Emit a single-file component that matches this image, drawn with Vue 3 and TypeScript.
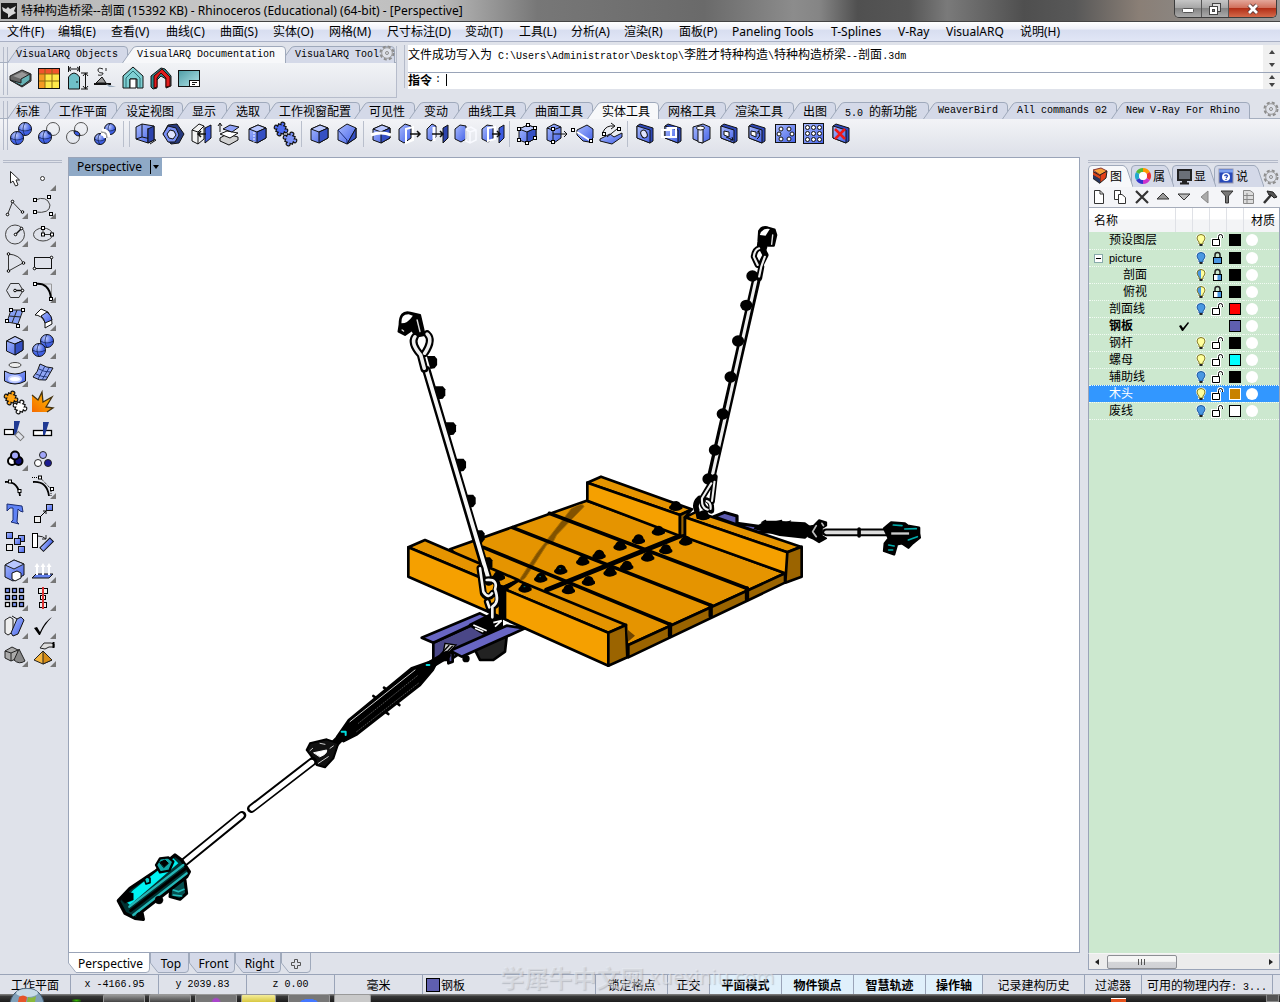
<script setup lang="ts">
import { ref } from 'vue'

interface Tab { label: string; x: number; latin?: boolean }
interface DrawnTab extends Tab { width: number; pad: number }
interface Layer {
  name: string; depth: number; bulb?: 'on' | 'off' | 'half'; lock?: 'open' | 'shut' | 'half'
  color: string; current?: boolean; selected?: boolean; parent?: boolean
}

const menus: [string, number][] = [
  ['文件(F)', 51], ['编辑(E)', 53], ['查看(V)', 55], ['曲线(C)', 54], ['曲面(S)', 53], ['实体(O)', 56],
  ['网格(M)', 58], ['尺寸标注(D)', 78], ['变动(T)', 54], ['工具(L)', 52], ['分析(A)', 53], ['渲染(R)', 55],
  ['面板(P)', 53], ['Paneling Tools', 99], ['T-Splines', 67], ['V-Ray', 48], ['VisualARQ', 74], ['说明(H)', 60],
]

/* Tabs are given by where their label starts; each one leans over its left neighbour. */
function layTabs(list: Tab[], end: number): DrawnTab[] {
  return list.map((t, i) => {
    const start = i ? t.x - 15 : 7
    const stop = i + 1 < list.length ? list[i + 1].x - 9 : end
    return { ...t, width: stop - start, pad: t.x - start }
  })
}
const arqTabs = layTabs([
  { label: 'VisualARQ Objects', x: 16, latin: true },
  { label: 'VisualARQ Documentation', x: 137, latin: true },
  { label: 'VisualARQ Tool', x: 295, latin: true },
], 395)
const toolTabs = layTabs([
  { label: '标准', x: 16 }, { label: '工作平面', x: 59 }, { label: '设定视图', x: 126 }, { label: '显示', x: 192 },
  { label: '选取', x: 236 }, { label: '工作视窗配置', x: 279 }, { label: '可见性', x: 369 }, { label: '变动', x: 424 },
  { label: '曲线工具', x: 468 }, { label: '曲面工具', x: 535 }, { label: '实体工具', x: 602 }, { label: '网格工具', x: 668 },
  { label: '渲染工具', x: 735 }, { label: '出图', x: 803 }, { label: '5.0 的新功能', x: 845 },
  { label: 'WeaverBird', x: 938, latin: true }, { label: 'All commands 02', x: 1017, latin: true },
  { label: 'New V-Ray For Rhino', x: 1126, latin: true },
], 1250)
const arqActive = ref(1)
const toolActive = ref(10)

function leanLeft(w: number): string {
  return `M.5 17L11 2Q12.500 .5 15 .5H${w - 4}Q${w - 0.5} .5 ${w - 0.5} 4V17`
}
function leanRight(w: number): string {
  return `M.5 22V4Q.5 .5 4 .5H${w - 10}Q${w - 8} .5 ${w - 6} 4L${w} 22`
}
function hangDown(w: number): string {
  return `M.5 0V10L8 19.500H${w - 4}Q${w - 0.5} 19.500 ${w - 0.5} 16V0`
}

const B = 'fill="url(#blu)" stroke="#111"'
const sq = (x: number, y: number) => `<rect x="${x - 1.5}" y="${y - 1.5}" width="3" height="3" fill="#fff" stroke="#000"/>`
const dot = (x: number, y: number) => `<circle cx="${x}" cy="${y}" r="1.300" fill="#fff" stroke="#000"/>`
const sphere = (x: number, y: number, r = 6.5) =>
  `<circle cx="${x}" cy="${y}" r="${r}" fill="url(#ball)" stroke="#111"/><path d="M${x - r} ${y}Q${x} ${y + 4} ${x + r} ${y}M${x} ${y - r}Q${x - 4} ${y} ${x} ${y + r}" fill="none" stroke="#13245c" stroke-width=".8"/>`
const ghost = (x: number, y: number) => `<circle cx="${x}" cy="${y}" r="6.500" fill="none" stroke="#555"/>`
const cube = `<path d="M6 9L15 5L23 8V18L14 23L6 20Z" ${B}/><path d="M6 9L14 12L23 8L15 5Z" fill="#b9c7ff" stroke="#111"/><path d="M14 12L23 8V18L14 23Z" fill="#3550c4" stroke="#111"/>`
const slab = `<path d="M6 6L9 4L22 8V21L19 23L6 18Z" fill="#2e48b8" stroke="#111"/><path d="M6 6L19 10V23L6 18Z" ${B}/>`
const puzzle = (x: number, y: number, f: string) =>
  `<path transform="translate(${x} ${y}) rotate(20)" d="M-4 -4H-1.500Q-3 -7 0 -7Q3 -7 1.500 -4H4V-1.500Q7 -3 7 0Q7 3 4 1.500V4H1.500Q3 7 0 7Q-3 7 -1.500 4H-4V1.500Q-7 3 -7 0Q-7 -3 -4 -1.500Z" fill="${f}" stroke="#111" stroke-width="1.200"/>`
const gear = `<circle cx="14" cy="14" r="6.500" fill="none" stroke="#8d8d8d" stroke-width="2" stroke-dasharray="3 2.105"/><circle cx="14" cy="14" r="5.300" fill="#dfe2ea" stroke="#999"/><circle cx="14" cy="14" r="1.500" fill="none" stroke="#8d8d8d"/>`

const icons: Record<string, string> = {
  gear,
  slabArq: `<path d="M3 12L15 6L24 10V17L15 23L3 16Z" fill="#666" stroke="#222"/><path d="M6 12L15 8L21 11L14 15Z" fill="#999"/><path d="M14 15L23 10V16L15 22L3 16L14 19Z" fill="#66b2b5" stroke="#222"/>`,
  table: `<rect x="3.500" y="4.500" width="21" height="20" fill="#ffe94a" stroke="#111"/><path d="M4 5H24V10H4Z" fill="#f2542d"/><path d="M4 10H10V24H4Z" fill="#f59a23"/><path d="M10 5V24M17 5V24M4 10H24M4 17H24" stroke="#8a6a10"/>`,
  dims: `<path d="M5.500 25V13Q11 5 16.500 13V25Z" fill="#6fc0c8" stroke="#111"/><circle cx="14" cy="18" r=".8"/><path d="M5.500 2V8M16.500 2V8M5 5H17M18 9H25M18 25H25M22.500 9V25" stroke="#111" fill="none"/><path d="M8 3L5 5L8 7M14 3L17 5L14 7M20 12L22.500 9L25 12M20 22L22.500 25L25 22" fill="none" stroke="#111"/>`,
  level: `<path d="M3 20H20" stroke="#111" stroke-width="2"/><path d="M5 19L11 13L15 19Z" fill="#999" stroke="#111"/><path d="M15 20L25 23H18Z" fill="#9ab"/><path d="M12 5Q7 3 7 6T12 9Q12 12 7 11M15 4V7" fill="none" stroke="#222"/>`,
  houseOpen: `<path d="M4 24V12L14 3L24 12V24H18V15H11V24Z" fill="#7fd0d3" stroke="#111"/><path d="M7 24V14L14 7L21 14V24" fill="none" stroke="#2a6f74"/><path d="M11 24V15H17V24Z" fill="#fff" stroke="#111"/>`,
  houseRed: `<path d="M4 23V12L14 4L18 5L24 12V22L19 24V15L14 12L10 16V24L6 25Z" fill="#2b8d91" stroke="#111"/><path d="M7 24V12L15 5L23 13V22L19 23V14L14 9L10 14V23Z" fill="#e21d1d" stroke="#400"/>`,
  sheet: `<rect x="3.500" y="6.500" width="21" height="16" fill="url(#teal)" stroke="#111"/><rect x="14.500" y="16.500" width="10" height="6" fill="#fff" stroke="#111"/><path d="M17 18.500H22M17 20.500H20" stroke="#111"/>`,
  union: sphere(18, 9) + sphere(10, 18),
  diff: ghost(18, 9) + sphere(10, 17) + `<path d="M12 11Q17 12 16.500 15Q12 15 12 11Z" fill="#13245c"/>`,
  inter: ghost(18, 9) + ghost(10, 17) + `<path d="M11 11Q17 11 17 16Q11 16 11 11Z" fill="#3b5ae0" stroke="#111"/>`,
  split: sphere(19, 9, 5.5) + sphere(9, 19, 5.5) + `<path d="M11 10Q18 10 18 17M10 14Q14 14 14 18" fill="none" stroke="#fff" stroke-width="3"/><path d="M10 12Q16 12 16 18" fill="none" stroke="#777"/>`,
  extrude: `<path d="M5 7L11 4L23 6V20L17 23L5 19Z" ${B}/><path d="M11 4V17L5 19M11 17L25 20L19 24M17 8V23" fill="none" stroke="#111"/><path d="M17 9L23 6V20L17 23Z" fill="#2c43ad" stroke="#111"/>`,
  pipe: `<path d="M4 14L9 5L18 4L25 14L20 23L12 24Z" fill="#26397f" stroke="#111"/><path d="M4 14L9 6L17 8L20 15L16 22L9 22Z" fill="#7990f4" stroke="#111"/><path d="M8 14L11 10L15 11L17 15L14 19L10 18Z" fill="#dfe3ff" stroke="#111"/>`,
  pull: `<path d="M5 10L12 4L17 6V19L11 24L5 21Z" fill="#f3f3f3" stroke="#111"/><path d="M5 10L11 12V24M11 12L17 6" fill="none" stroke="#111"/><path d="M18 8L24 5V18L18 23Z" fill="#3b5ae0" stroke="#111"/><path d="M19 14H11M14 11L11 14L14 17" fill="none" stroke="#111" stroke-width="1.500"/>`,
  stack: `<path d="M5 18L12 14L23 17V20L14 25L5 21Z" fill="#d2d2d2" stroke="#111"/><path d="M5 14L12 11L23 13L15 18Z" fill="#fff" stroke="#111"/><path d="M8 9L15 5L24 7L17 12Z" fill="#8ea1f8" stroke="#111"/><path d="M5 12V4M3 6L5 3L7 6" fill="none" stroke="#111"/>`,
  cubeDash: cube + `<path d="M11 12V22" stroke="#fff" stroke-dasharray="2 1"/>`,
  puzzles: puzzle(10, 9, '#4e6cf0') + puzzle(19, 19, '#7b92f7'),
  cube,
  cubeCut: `<path d="M5 10L14 4L23 8V18L14 24L5 20Z" ${B}/><path d="M23 8L14 24V20L5 10" fill="none" stroke="#1b2c7a"/><path d="M23 8V18L14 24Z" fill="#3550c4" stroke="#111"/>`,
  slice: cube + `<path d="M4 15Q14 11 24 15" fill="none" stroke="#fff" stroke-width="3"/>`,
  moveFace: `<path d="M4 9L10 4L16 6V18L9 23L4 20Z" ${B}/><path d="M11 9L18 7V20L11 23Z" fill="none" stroke="#fff" stroke-width="2"/><path d="M15 14H25M22 11L25 14L22 17" fill="none" stroke="#111" stroke-width="1.500"/>`,
  moveTo: `<path d="M4 9L9 4L13 6V17L8 21L4 19Z" ${B}/><path d="M20 8L25 5V18L20 23Z" fill="#2c43ad" stroke="#111"/><path d="M11 7V21" stroke="#fff" stroke-width="3"/><path d="M9 14H20M17 11L20 14L17 17" fill="none" stroke="#111" stroke-width="1.500"/>`,
  copyHole: `<path d="M4 9L9 5L15 6V19L10 22L4 19Z" ${B}/><path d="M15 9L20 7L25 10V20L19 23L15 21ZM15 9L19 12L25 10M19 12V23" fill="none" stroke="#f9faff" stroke-width="1.500"/>`,
  offsetFace: `<path d="M3 9L8 5L14 6V19L9 22L3 19Z" ${B}/><path d="M9 8L16 7V19L9 21Z" fill="none" stroke="#fff" stroke-width="2"/><path d="M20 8L25 5V18L20 23Z" fill="#3b5ae0" stroke="#111"/><path d="M13 14H21M18 11L21 14L18 17" fill="none" stroke="#111" stroke-width="1.500"/>`,
  cubePts: cube + sq(6, 9) + sq(15, 5) + sq(22, 8) + sq(22, 18) + sq(14, 23) + sq(6, 20),
  edgeMove: `<path d="M6 8L13 4L20 7V18L13 23L6 20Z" ${B}/><path d="M6 8L12 10L20 7M12 10V23M12 14H26M23 11L26 14L23 17" fill="none" stroke="#111"/>` + sq(12, 9) + sq(12, 22),
  faceSlide: `<path d="M8 10L18 5L24 9V18L20 22L14 21L8 15Z" ${B}/><path d="M8 12L22 21" stroke="#fff" stroke-width="2"/>` + sq(4, 10) + sq(22, 21),
  fold: `<path d="M3 19L13 14L17 17L25 13L25 17L15 24L3 21Z" ${B}/><path d="M6 12Q9 5 17 6M14 3L18 6L14 9" fill="none" stroke="#111"/><path d="M10 17L20 9" stroke="#111"/>` + sq(22, 9) + sq(7, 14),
  hole: slab + `<ellipse cx="13" cy="14" rx="3" ry="4" fill="#dfe3ff" stroke="#111" transform="rotate(-25 13 14)"/>`,
  holeRect: slab + `<path d="M3 10H12V17H3ZM8 8H17V17H8" fill="none" stroke="#fff" stroke-width="2"/>`,
  holeRound: `<path d="M6 7L16 4L23 7V19L15 23L6 19Z" ${B}/><path d="M11 8V22L16 23V9" fill="#e1e6ff" stroke="#111"/><ellipse cx="13.500" cy="8" rx="4" ry="2" fill="#fff" stroke="#111"/>`,
  holeMove: slab + `<path d="M9 11L14 12V17L9 15Z" fill="#fff" stroke="#111"/><path d="M11 17L18 20M15 20L18 20L17 17" fill="none" stroke="#111"/>`,
  holeTurn: slab + `<path d="M8 11L13 12V17L8 15Z" fill="#fff" stroke="#111"/><path d="M15 11Q19 15 14 19M17 11L15 11L15 14" fill="none" stroke="#111"/>`,
  holeRing: `<rect x="4.500" y="4.500" width="20" height="18" ${B}/>` + [[10, 9], [18, 9], [8, 14], [21, 14], [10, 19], [18, 19]].map(p => `<circle cx="${p[0]}" cy="${p[1]}" r="2" fill="#fff" stroke="#111"/>`).join(''),
  holeGrid: `<rect x="4.500" y="3.500" width="20" height="20" ${B}/>` + [8, 14, 20].map(y => [8.5, 14.5, 20.5].map(x => `<circle cx="${x}" cy="${y - 0.5}" r="2" fill="#fff" stroke="#111"/>`).join('')).join(''),
  holeDelete: slab + `<path d="M8 9L18 19M18 9L8 19" stroke="#f01818" stroke-width="2.500"/>`,

  arrow: `<path d="M9.500 7.500V19L12 17L14.500 22L17 21L15 16H18.500Z" fill="#fff" stroke="#222"/>`,
  point: `<circle cx="13.500" cy="14.500" r="2" fill="#fff" stroke="#333"/>`,
  polyline: `<path d="M6.500 22.500L11.500 10L21 20" fill="none" stroke="#333"/>` + dot(6.5, 22.5) + dot(11.5, 9.5) + dot(21.5, 20),
  curve: `<path d="M6 8Q18 3 21 13Q21 22 6 20" fill="none" stroke="#444"/>` + sq(6, 8) + sq(20, 5) + sq(6, 20) + sq(22, 22),
  circle: `<circle cx="14" cy="14.500" r="9.500" fill="none" stroke="#444"/><path d="M14.500 14.500L20.500 8.500" stroke="#111" stroke-width="1.500"/>` + dot(14.5, 14.5) + dot(20.5, 8.5),
  ellipse: `<ellipse cx="14" cy="14.500" rx="9.500" ry="6.500" fill="none" stroke="#444"/><path d="M14 8V14.500H23" fill="none" stroke="#333"/>` + sq(14, 8) + sq(14, 14.5) + sq(23, 14.5),
  arc: `<path d="M7.500 23V6Q19 7 22 15L7.500 23" fill="none" stroke="#333"/>` + dot(7.5, 6) + dot(22.5, 15) + dot(7.5, 23),
  rect: `<rect x="5.500" y="9.500" width="17" height="11" fill="none" stroke="#111"/>` + dot(22.5, 9.5) + dot(5.5, 20.5),
  polygon: `<path d="M5.500 14.500L9.500 7.500H18L22 14.500L18 21.500H9.500Z" fill="none" stroke="#333"/><path d="M14 14.500H21" stroke="#111" stroke-width="1.500"/>` + dot(14, 14.5) + dot(21.5, 14.5),
  fillet: `<path d="M6 8H22.500V23" fill="none" stroke="#999"/><path d="M6 8Q20 6 22 22" fill="none" stroke="#000" stroke-width="2"/>` + sq(6, 8) + sq(22, 23),
  surface: `<path d="M10 6H22L17 20L6 18Z" fill="#86a0f4" stroke="#222"/><path d="M8 12L20 13M16 6L11 19" stroke="#222"/>` + sq(10, 6) + sq(22, 6) + sq(6, 17) + sq(17, 22),
  sweep: `<path d="M6 11L12 5L19 8Q24 14 23 20L16 24L16 18Q12 11 6 11Z" fill="#fff" stroke="#111"/><path d="M12 12L18 8Q23 12 23 16L16 19Q15 14 12 12Z" fill="url(#blu)" stroke="#111"/>`,
  box: `<path d="M5.500 9L14 4.500L22 8.500V18L14 23L5.500 19Z" ${B}/><path d="M5.500 9L14 12L22 8.500L14 4.500Z" fill="#b9c7ff" stroke="#111"/><path d="M14 12L22 8.500V18L14 23Z" fill="#3550c4" stroke="#111"/>`,
  balls: sphere(18, 9) + sphere(10, 18),
  ring: `<ellipse cx="14" cy="5" rx="6" ry="2.500" fill="#eee" stroke="#444"/><path d="M3.500 11Q14 17 24.500 11V21Q14 27 3.500 21Z" ${B}/><ellipse cx="14" cy="19" rx="6" ry="3" fill="#fff" stroke="#c8d2ff" stroke-width="2"/>`,
  wave: `<path d="M11 4Q18 8 24 8L17 20Q10 21 4 17Q9 12 11 4Z" fill="#90a6f5" stroke="#111"/><path d="M10 9Q15 12 21 12M7 14Q13 17 18 17M16 6L9 19M20 8L13 20" fill="none" stroke="#22377a"/>`,
  puzzleOrange: puzzle(10, 10, '#ffa313') + puzzle(19, 19, '#fff'),
  explode: `<path d="M3 7L9 12L13 4L14 14L23 9L17 19L24 20L18 24H3Z" fill="url(#fire)"/><path d="M3 7L9 12L13 4L14 14L23 9L17 19L24 20L18 24" fill="none" stroke="#431" stroke-width="1.300"/>`,
  trim: `<rect x="3.500" y="13.500" width="9" height="5" fill="#fff" stroke="#000" stroke-width="1.200"/><path d="M13 5H19L15 19H13Z" fill="#1f3a93"/><rect x="15" y="17" width="8" height="5" fill="none" stroke="#777" transform="rotate(45 18 19)"/>`,
  splitCurve: `<rect x="4.500" y="14.500" width="18" height="5" fill="#fff" stroke="#000" stroke-width="1.300"/><path d="M14 6H20L16 19H14Z" fill="#1f3a93"/>`,
  group: `<g stroke="#000" stroke-width="2"><circle cx="11" cy="17" r="4" fill="#fff"/><circle cx="17.500" cy="17" r="4" fill="#12127a"/><circle cx="14" cy="11.500" r="4" fill="#a2a7fa"/></g>`,
  ungroup: `<g stroke="#222"><circle cx="9" cy="19" r="3.500" fill="#fff"/><circle cx="19" cy="19" r="3.500" fill="#1b1b92"/><circle cx="14" cy="11" r="3.500" fill="#a2a7fa"/></g>`,
  editPts: `<path d="M4 10Q17 9 19 24" fill="none" stroke="#000" stroke-width="1.800"/>` + sq(9, 9.5) + sq(18.5, 19),
  ctrlPts: `<path d="M4 10Q18 9 20 24" fill="none" stroke="#000" stroke-width="1.800"/><path d="M3 5.500H11L22 17V24" fill="none" stroke="#000" stroke-dasharray="1 1"/>` + sq(11, 5.5) + sq(23, 17),
  text: `<path d="M6 4L21 6L22 12L19 11L17 9L16 22L18 24L10 22L12 20V8L9 8L6 11Z" fill="#5f82f5" stroke="#1a2c70"/>`,
  move: `<rect x="5.500" y="16.500" width="6" height="6" fill="#eee" stroke="#000"/><rect x="17.500" y="4.500" width="6" height="6" ${B}/><path d="M12 16L17 11M14 11H17V14" fill="none" stroke="#000"/>`,
  copy: [[5, 5], [17, 8], [13, 11], [17, 19]].map(p => `<rect x="${p[0] + 0.5}" y="${p[1] - 0.5}" width="6" height="6" ${B}/>`).join('') + `<rect x="5.500" y="16.500" width="6" height="6" fill="#eee" stroke="#000"/>`,
  rotate: `<rect x="3.500" y="5.500" width="5" height="14" fill="#fff" stroke="#000"/><rect x="11" y="14" width="14" height="5" ${B} transform="rotate(-45 18 17)"/><path d="M9 8Q14 8 17 11M17 7V11H13" fill="none" stroke="#222"/>`,
  solid: `<path d="M4 9L13 4L23 8V19L12 25L4 21Z" ${B}/><path d="M4 9L13 13L23 8L13 4Z" fill="#b9c7ff" stroke="#222"/><path d="M11 17L16 15L20 17V22L14 25L11 23Z" fill="#fff" stroke="#111"/>`,
  up: `<path d="M3 22L7 18H24L20 22Z" fill="#6785f2" stroke="#111"/><path d="M8 19V10M14 19V10M20 19V10" stroke="#fff" stroke-width="2"/><path d="M5.500 11L8 7L10.500 11ZM11.500 11L14 7L16.500 11ZM17.500 11L20 7L22.500 11Z" fill="#fff"/>`,
  array: [0, 1, 2].map(r => [0, 1, 2].map(c => `<rect x="${4.5 + c * 7}" y="${4.5 + r * 7}" width="4" height="4" fill="${r === 2 && c === 0 ? '#fff' : '#7d97f8'}" stroke="#000" stroke-width="1.300"/>`).join('')).join(''),
  align: `<rect x="9.500" y="4.500" width="9" height="5" fill="#eee" stroke="#000"/><rect x="11.500" y="11.500" width="5" height="4" fill="#eee" stroke="#000"/><rect x="10.500" y="18.500" width="7" height="5" fill="#eee" stroke="#000"/><path d="M14 3V25" stroke="#d33" stroke-width="2"/>`,
  bend: `<path d="M4 8L9 5L12 7V20L7 23L4 21Z" fill="#eee" stroke="#222"/><path d="M16 7L20 5L23 8L17 22L12 24L10 21Z" ${B}/><path d="M11 4L16 7" stroke="#111"/>`,
  check: `<path d="M5 16L8 15L11 20Q16 9 23 5Q15 13 11 23H10Z" fill="#000"/>`,
  solids: `<path d="M4 11L11 7L17 10V18L10 21L4 18Z" fill="#aaa" stroke="#222"/><path d="M4 11L10 13L17 10M10 13V21" fill="none" stroke="#222"/><path d="M18 9L24 21Q18 25 13 20Z" fill="#888" stroke="#222"/>`,
  pyramid: `<path d="M14 11L23 20L14 24L5 20Z" fill="#f5b53f" stroke="#222"/><path d="M14 11V24L23 20Z" fill="#d58d18" stroke="#222"/><path d="M11 8L15 3H22L25 4V7L20 7L16 9Z" fill="#ddd" stroke="#222"/><path d="M24.500 2V8" stroke="#000" stroke-width="2"/>`,
}

const arqIcons = ['slabArq', 'table', 'dims', 'level', 'houseOpen', 'houseRed', 'sheet']
const toolGroups = [
  ['union', 'diff', 'inter', 'split'],
  ['extrude', 'pipe', 'pull', 'stack', 'cubeDash', 'puzzles'],
  ['cube', 'cubeCut'],
  ['slice', 'moveFace', 'moveTo', 'copyHole', 'offsetFace'],
  ['cubePts', 'edgeMove', 'faceSlide', 'fold'],
  ['hole', 'holeRect', 'holeRound', 'holeMove', 'holeTurn', 'holeRing', 'holeGrid', 'holeDelete'],
]
const sideIcons = [
  'arrow', 'point', 'polyline', 'curve', 'circle', 'ellipse', 'arc', 'rect', 'polygon', 'fillet', 'surface', 'sweep',
  'box', 'balls', 'ring', 'wave', 'puzzleOrange', 'explode', 'trim', 'splitCurve', 'group', 'ungroup', 'editPts', 'ctrlPts',
  'text', 'move', 'copy', 'rotate', 'solid', 'up', 'array', 'align', 'bend', 'check', 'solids', 'pyramid',
]
const noFlyout = new Set(['arrow', 'puzzleOrange', 'explode', 'trim', 'splitCurve', 'ungroup', 'editPts', 'text', 'copy', 'rotate'])

const panelTabs = [
  { label: '图', width: 45, icon: '<path d="M2 4L9 7V17L2 12Z" fill="#222"/><path d="M2 3L10 1L16 4L9 8Z" fill="#f7a23b" stroke="#833"/><path d="M9 8L16 4L15 11L9 16Z" fill="#e5421b" stroke="#222"/><path d="M2 5L9 9V12L2 8Z" fill="#d8451e"/><path d="M2 8L9 12V16L2 11Z" fill="#27365f"/>' },
  { label: '属', width: 43, icon: '<g fill="none" stroke-width="4"><path d="M9 3A6 6 0 0 1 14.200 6" stroke="#f90"/><path d="M14.200 6A6 6 0 0 1 14.200 12" stroke="#e33"/><path d="M14.200 12A6 6 0 0 1 9 15" stroke="#c3c"/><path d="M9 15A6 6 0 0 1 3.800 12" stroke="#33c"/><path d="M3.800 12A6 6 0 0 1 3.800 6" stroke="#2ac"/><path d="M3.800 6A6 6 0 0 1 9 3" stroke="#5b3"/></g><circle cx="9" cy="9" r="4" fill="#fff"/>' },
  { label: '显', width: 44, icon: '<rect x="3" y="3" width="13" height="10" fill="#6b7078" stroke="#222" stroke-width="2"/><path d="M7 15H12M5 16.500H14" stroke="#222" stroke-width="2"/>' },
  { label: '说', width: 50, icon: '<rect x="2" y="2" width="14" height="14" fill="#2749b8" stroke="#99a"/><path d="M2 4H16" stroke="#7ca0ee" stroke-width="3"/><circle cx="9" cy="10" r="4" fill="#fff"/><path d="M7.500 9Q9 7 10.500 9Q10 10 9 11M9 12V13" fill="none" stroke="#2749b8" stroke-width="1.300"/>' },
]
const panelTools = [
  '<path d="M5.500 3.500H11L14.500 7V16.500H5.500Z" fill="#fff" stroke="#333"/><path d="M11 3.500V7H14.500" fill="none" stroke="#333"/>',
  '<path d="M4.500 3.500H10.500V12.500H4.500Z" fill="#fff" stroke="#333"/><path d="M8.500 7.500H12L15.500 10.500V16.500H8.500Z" fill="#fff" stroke="#333"/>',
  '<path d="M4 4L16 16M16 4L4 16" stroke="#333" stroke-width="2.200"/>',
  '<path d="M4 12L10 6L16 12Z" fill="#999" stroke="#333"/>',
  '<path d="M4 7L10 13L16 7Z" fill="#bbb" stroke="#333"/>',
  '<path d="M13 4V16L6 10Z" fill="#aaa" stroke="#888"/>',
  '<path d="M4 4H16L11.500 9V16H8.500V9Z" fill="#777" stroke="#333"/>',
  '<path d="M5.500 3.500H12L15.500 6V16.500H5.500ZM5.500 8.500H15.500M5.500 12.500H15.500M9 6V16" fill="#ddd" stroke="#888"/>',
  '<path d="M5 16L12 8" stroke="#333" stroke-width="2.500"/><path d="M8 4L14 5L18 10L15 11L12 8L10 8Z" fill="#555" stroke="#222"/>',
]
const layers: Layer[] = [
  { name: '预设图层', depth: 0, bulb: 'on', lock: 'open', color: '#000' },
  { name: 'picture', depth: 0, bulb: 'off', lock: 'shut', color: '#000', parent: true },
  { name: '剖面', depth: 1, bulb: 'half', lock: 'half', color: '#000' },
  { name: '俯视', depth: 1, bulb: 'half', lock: 'half', color: '#000' },
  { name: '剖面线', depth: 0, bulb: 'off', lock: 'open', color: '#f00' },
  { name: '钢板', depth: 0, color: '#5f5fb0', current: true },
  { name: '钢杆', depth: 0, bulb: 'on', lock: 'open', color: '#000' },
  { name: '螺母', depth: 0, bulb: 'on', lock: 'open', color: '#0ff' },
  { name: '辅助线', depth: 0, bulb: 'off', lock: 'open', color: '#000' },
  { name: '木头', depth: 0, bulb: 'on', lock: 'open', color: '#c88200', selected: true },
  { name: '废线', depth: 0, bulb: 'off', lock: 'open', color: '#fff' },
]
const bulbFill = { on: '#ffff9c', off: '#4a97e2', half: 'url(#half)' }

const viewTabs: [string, number][] = [['Perspective', 82], ['Top', 39], ['Front', 46], ['Right', 46]]
const viewActive = ref(0)
const command = ref('')

/* Bolt heads on the deck, and the clips strung along the two hangers. */
const bolts = [[805, 212], [745, 238], [690, 257], [627, 284], [578, 302], [512, 329], [452, 353], [405, 383], [325, 348], [887, 242], [827, 268], [773, 290], [710, 317], [660, 335], [595, 363], [535, 388], [857, 138], [940, 166]]
const leftClips = [[147, 442], [170, 533], [200, 641], [228, 750], [255, 858], [280, 965], [302, 1046]]
const rightClips = [[1043, 183], [1026, 271], [1003, 378], [982, 486], [960, 597], [938, 705], [920, 792]]
</script>

<template>
  <div class="app">
    <svg class="defs" aria-hidden="true">
      <defs>
        <linearGradient id="blu" x1="0" y1="0" x2="1" y2="1"><stop offset="0" stop-color="#a9bbff" /><stop offset="1" stop-color="#4361e6" /></linearGradient>
        <radialGradient id="ball" cx=".4" cy=".3"><stop offset="0" stop-color="#c3d0ff" /><stop offset="1" stop-color="#3f60e4" /></radialGradient>
        <linearGradient id="teal" x1="0" y1="0" x2="1" y2="1"><stop offset="0" stop-color="#4e9da6" /><stop offset="1" stop-color="#b4e4e8" /></linearGradient>
        <linearGradient id="fire" x1="1" y1="0" x2="0" y2="1"><stop offset="0" stop-color="#ffc400" /><stop offset="1" stop-color="#f56a00" /></linearGradient>
        <linearGradient id="half"><stop offset=".5" stop-color="#4a97e2" /><stop offset=".5" stop-color="#ffff9c" /></linearGradient>
      </defs>
    </svg>

    <header class="title">
      <svg class="logo" width="16" height="16" viewBox="0 0 16 16"><rect width="16" height="16" fill="#1b1b1b" /><path d="M1 4L5 6L7 4L9 6L15 3L13 8L15 10L11 12L7 15L7 11L2 8Z" fill="#d8d8d8" /></svg>
      <h1>特种构造桥梁--剖面 (15392 KB) - Rhinoceros (Educational) (64-bit) - [Perspective]</h1>
      <div class="winbtns">
        <button aria-label="最小化"><svg width="14" height="12"><rect x="1.500" y="5.500" width="11" height="4" rx="1" fill="#fff" stroke="#555" /></svg></button>
        <button aria-label="还原"><svg width="14" height="14"><rect x="4.500" y="1.500" width="8" height="8" fill="#ddd" stroke="#444" /><rect x="1.500" y="4.500" width="8" height="8" fill="#fff" stroke="#444" /><rect x="4.500" y="7.500" width="2" height="2" fill="#888" stroke="#444" /></svg></button>
        <button class="close" aria-label="关闭"><svg width="14" height="12"><path d="M3 2L11 10M11 2L3 10" stroke="#533" stroke-width="4.500" /><path d="M3 2L11 10M11 2L3 10" stroke="#fff" stroke-width="2.800" /></svg></button>
      </div>
    </header>

    <nav class="menu">
      <button v-for="m in menus" :key="m[0]" :style="{ width: m[1] + 'px' }">{{ m[0] }}</button>
    </nav>

    <div class="top">
      <section class="arq">
        <div class="tabs">
          <button v-for="(t, i) in arqTabs" :key="t.label" class="tab latin" :class="{ on: i === arqActive }" :style="{ width: t.width + 'px', paddingLeft: t.pad + 'px' }" @click="arqActive = i">
            <svg :width="t.width" height="17"><path :d="leanLeft(t.width)" /></svg>{{ t.label }}
          </button>
          <button class="cog" aria-label="选项"><svg width="16" height="16" viewBox="6 6 16 16" v-html="icons.gear" /></button>
        </div>
        <div class="bar">
          <button v-for="n in arqIcons" :key="n" class="tool" :aria-label="n"><svg width="28" height="28" viewBox="0 0 28 28" v-html="icons[n]" /></button>
        </div>
      </section>
      <section class="cmd">
        <div class="history">
          <p>文件成功写入为<span class="latin"> C:\Users\Administrator\Desktop\</span>李胜才特种构造<span class="latin">\</span>特种构造桥梁<span class="latin">--</span>剖面<span class="latin">.3dm</span></p>
          <div class="vscroll"><i class="up"></i><i class="down"></i></div>
        </div>
        <div class="prompt">
          <label for="cmd">指令</label><span class="colon latin">:</span>
          <span class="caret"></span>
          <input id="cmd" v-model="command" class="latin" />
          <div class="spin"><i class="up"></i><i class="down"></i></div>
        </div>
      </section>
    </div>

    <section class="tools">
      <div class="tabs">
        <button v-for="(t, i) in toolTabs" :key="t.label" class="tab" :class="{ on: i === toolActive, latin: t.latin }" :style="{ width: t.width + 'px', paddingLeft: t.pad + 'px' }" @click="toolActive = i">
          <svg :width="t.width" height="17"><path :d="leanLeft(t.width)" /></svg><template v-if="t.label.startsWith('5.0')"><span class="latin">5.0 </span>的新功能</template><template v-else>{{ t.label }}</template>
        </button>
        <button class="cog" aria-label="选项"><svg width="16" height="16" viewBox="6 6 16 16" v-html="icons.gear" /></button>
      </div>
      <div class="bar">
        <div v-for="(g, i) in toolGroups" :key="i" class="group">
          <button v-for="n in g" :key="n" class="tool" :aria-label="n"><svg width="28" height="28" viewBox="0 0 28 28" v-html="icons[n]" /></button>
        </div>
      </div>
    </section>

    <main>
      <aside class="side">
        <div class="grip"></div>
        <div class="grid">
          <button v-for="n in sideIcons" :key="n" class="tool" :aria-label="n">
            <svg width="28" height="28" viewBox="0 0 28 28"><g v-html="icons[n]" /><path v-if="!noFlyout.has(n)" d="M27 21V27H21Z" fill="#777" /></svg>
          </button>
        </div>
      </aside>

      <section class="work">
        <div class="viewport">
          <button class="vlabel"><span>Perspective</span><i class="down"></i></button>
          <svg class="scene" viewBox="69 158 1010 794">
            <!-- anchor line behind the deck -->
            <g transform="translate(380 215) scale(.357 .33333)" stroke-linejoin="round" stroke-linecap="round">
              <path d="M935 905L965 892L1000 903V925L1070 935L1100 950L1060 952Z" fill="#5d5bb0" stroke="#000" stroke-width="9" />
              <path d="M1050 940L1080 920H1110L1190 925L1215 945L1190 968L1120 960Z" stroke="#000" stroke-width="6" />
              <path d="M1070 922L1080 916M1110 920L1125 916M1140 922L1150 918" stroke="#000" stroke-width="4" />
              <path d="M1250 952H1430" stroke="#000" stroke-width="23" />
              <path d="M1250 952H1420" stroke="#ddd" stroke-width="11" />
              <path d="M1342 942V963" stroke="#000" stroke-width="10" />
              <path d="M1200 935L1215 932L1230 915L1250 922V932L1238 940V962L1250 970L1230 982L1215 972L1200 965Z" stroke="#000" stroke-width="5" />
              <path d="M1222 932L1212 950L1222 965M1238 925L1242 932" fill="none" stroke="#bbb" stroke-width="5" />
              <path d="M1412 940L1432 922L1470 925L1478 932L1510 938V955L1512 968L1492 985L1480 998L1462 985L1448 988L1440 1018L1412 1008L1414 985L1425 970Z" stroke="#000" stroke-width="7" />
              <path d="M1432 952H1482V959H1432Z" fill="#ccc" />
              <path d="M1438 930L1462 932M1470 942L1502 941M1480 975L1505 965M1425 990L1440 993M1425 1005H1436" stroke="#0aa" stroke-width="5" />
            </g>
            <!-- timber deck -->
            <g transform="translate(390 460) scale(.33333)" stroke="#000" stroke-width="8" stroke-linejoin="round" stroke-linecap="round">
              <path d="M180 268L590 122L1185 340L715 555L345 400Z" fill="#e59400" />
              <path d="M715 555L1185 340V368L715 592Z" fill="#9b6400" />
              <path d="M545 145Q580 125 582 140L500 225L490 245L470 255L440 302L405 355L380 372L440 280Z" fill="#603c00" stroke="#9b6400" stroke-width="3" opacity=".75" />
              <path d="M478 160L1070 385M368 203L965 437M280 262L840 493" stroke-width="11" fill="none" />
              <path d="M1071 385V418M962 437V468M840 493V528" stroke-width="13" />
              <path d="M470 390L870 228" stroke-width="15" />
              <path d="M592 68L633 50L905 148L870 165Z" fill="#e59400" />
              <path d="M592 68L870 165V228L592 122Z" fill="#f5a000" />
              <path d="M870 165L905 148L885 172V225L870 228Z" fill="#9b6400" />
              <path d="M885 172L920 155L1232 260L1192 277Z" fill="#e59400" />
              <path d="M885 172L1192 277V342L885 232Z" fill="#f5a000" />
              <path d="M1192 277L1235 260V350L1186 368Z" fill="#9b6400" />
              <path d="M55 262L105 240L385 360L340 382Z" fill="#e59400" />
              <path d="M55 262L340 382V475L55 350Z" fill="#f5a000" />
              <path d="M330 385L385 362L350 390V475H330Z" fill="#000" />
              <path d="M345 388L385 362L708 495L655 518Z" fill="#e59400" />
              <path d="M345 388L655 518V617L345 478Z" fill="#f5a000" />
              <path d="M655 518L708 495L712 592L655 617Z" fill="#9b6400" />
              <path d="M714 510L735 527L714 545Z" fill="#704600" stroke="none" />
            </g>
            <g transform="translate(390 460) scale(.33333)">
              <g v-for="(b, i) in bolts" :key="i" :transform="`translate(${b[0]} ${b[1]})`">
                <path d="M-20 6Q-20 0 -15 -2Q-10 -15 2 -15Q13 -14 16 -2Q22 0 20 8Q10 15 0 15Q-16 14 -20 6Z" />
                <path v-if="i > 4 && i < 8" d="M-4 -3H1" stroke="#077" stroke-width="3" />
              </g>
              <!-- steel channel under the deck -->
              <g stroke="#000" stroke-width="8" stroke-linejoin="round">
                <path d="M250 560L350 530L345 575L310 600L270 600Z" fill="#222" />
                <path d="M130 548L280 480L330 500L180 600H130Z" fill="#4a4787" />
                <path d="M95 533L270 460L295 472L130 548Z" fill="#6866c3" />
                <path d="M180 572L350 497L405 505L215 590Z" fill="#6866c3" />
                <path d="M175 575V610L188 605V580Z" fill="#5653a1" />
                <path d="M240 495L300 465L335 478L335 498L280 520Z" fill="#000" />
              </g>
              <path d="M250 495L290 512M255 505L280 515M310 488L335 482L315 500" fill="none" stroke="#fff" stroke-width="5" />
              <path d="M165 550L198 555L155 600Z" fill="#ccc" stroke="#000" stroke-width="4" />
              <path d="M150 585L178 555M158 590L188 558" stroke="#000" stroke-width="4" />
              <circle cx="228" cy="596" r="11" />
            </g>
            <!-- hangers -->
            <g transform="translate(380 215) scale(.357 .33333)" stroke-linejoin="round" stroke-linecap="round">
              <path v-for="(c, i) in leftClips" :key="'l' + i" :transform="`translate(${c[0]} ${c[1]})`" d="M-16 -19H6L13 -10V8L6 18L-6 20Z" />
              <path d="M130 465L305 1100" stroke="#000" stroke-width="24" /><path d="M130 465L305 1095" stroke="#f6f6f6" stroke-width="11" />
              <path d="M55 330Q55 285 85 293L112 300L125 360L100 365L90 345L70 360L52 350Z" stroke="#000" stroke-width="6" />
              <path d="M60 325Q58 298 80 298L92 302Q78 325 60 325Z" fill="#fff" />
              <path d="M104 315L112 350M62 345L66 348" stroke="#ddd" stroke-width="4" />
              <path d="M124 462L114 420Q85 385 98 365M125 415Q150 375 132 357" fill="none" stroke="#000" stroke-width="22" />
              <path d="M124 460L114 420Q85 385 98 365M125 415Q150 375 132 357" fill="none" stroke="#eee" stroke-width="10" />
              <path d="M1055 190L925 800" stroke="#000" stroke-width="24" /><path d="M1053 195L928 795" stroke="#eee" stroke-width="9" />
              <circle v-for="(c, i) in rightClips" :key="'r' + i" :cx="c[0]" :cy="c[1]" r="17" />
              <path d="M1060 80L1062 48Q1070 33 1085 37L1105 43L1110 60L1103 92H1088V75L1078 110L1058 100Z" stroke="#000" stroke-width="6" />
              <path d="M1064 60Q1070 38 1092 42L1080 62Z" fill="#fff" /><path d="M1100 60L1097 88" stroke="#ddd" stroke-width="4" />
              <path d="M1062 190L1068 155M1058 150L1047 125Q1050 103 1062 100M1066 150L1080 120L1070 100" fill="none" stroke="#000" stroke-width="17" />
              <path d="M1062 185L1068 155L1078 125M1058 150L1047 125Q1050 103 1062 100" fill="none" stroke="#eee" stroke-width="6" />
              <path d="M930 800L902 850Q900 880 922 885M895 850Q880 865 887 885M938 785L930 860M915 855Q930 860 928 888" fill="none" stroke="#000" stroke-width="16" />
              <path d="M928 805L902 850Q900 880 918 884M937 800L930 858M915 858Q928 862 926 882" fill="none" stroke="#eee" stroke-width="6" />
            </g>
            <g transform="translate(390 460) scale(.33333)" fill="none" stroke-linecap="round" stroke-linejoin="round">
              <path d="M270 325L280 400Q295 420 308 400M290 360Q330 355 318 390Q335 430 307 440V472M292 425L300 450" stroke="#000" stroke-width="21" />
              <path d="M270 325L280 395Q295 418 306 400M290 360Q325 357 315 388Q330 428 307 440V472M292 425L298 442" stroke="#f2f2f2" stroke-width="8" />
              <path d="M918 158L950 158L955 175H922Z" fill="#000" stroke="#000" stroke-width="4" />
            </g>
            <!-- turnbuckle and anchor clamp -->
            <g transform="translate(110 620) scale(.33333)" stroke="#000" stroke-linejoin="round" stroke-linecap="round">
              <path d="M660 385L700 345M960 135L1010 105" stroke-width="24" />
              <path d="M680 350L715 300L905 143L965 122L980 130L970 150L930 197L740 345L700 365Z" stroke-width="5" />
              <path d="M790 228L800 235M822 203L832 210M825 275L835 282M860 248L868 255" stroke-width="8" />
              <path d="M720 305L915 150" stroke="#ccc" stroke-width="3" /><path d="M745 310L925 165M740 335L925 190" stroke="#777" stroke-width="2" stroke-dasharray="3 5" />
              <path d="M695 335H707V345M950 135H958" fill="none" stroke="#0dd" stroke-width="6" />
              <path d="M590 390L600 370L650 358L685 370L670 415L645 442L620 435L605 410Z" fill="#111" stroke-width="6" />
              <path d="M612 398L650 390Q652 402 630 410Z" fill="#fff" stroke="#fff" stroke-width="3" />
              <path d="M600 392L608 385M630 370L645 373M660 385L670 378M625 430L655 410" fill="none" stroke="#ccc" stroke-width="3" />
              <path d="M424 566L608 424" stroke-width="26" /><path d="M426 565L605 427" stroke="#fff" stroke-width="15" />
              <path d="M225 725L396 586" stroke-width="26" /><path d="M225 725L394 587" stroke="#fff" stroke-width="15" />
              <path d="M185 775L225 780L230 820L210 838L180 830Z" fill="#054f4f" stroke-width="9" />
              <path d="M25 842L60 805L135 755L195 705L215 720L238 755L230 770L95 875L100 898L75 895L45 880Z" fill="#033" stroke-width="10" />
              <path d="M42 840L70 810L190 715L205 730L60 855Z" fill="#00f2f2" stroke="none" />
              <path d="M58 860L220 735M70 885L230 760" stroke="#25b5b5" stroke-width="7" /><path d="M62 872L225 747" stroke="#000" stroke-width="9" />
              <path d="M138 735L150 715L175 712L190 725L178 752L150 757Z" fill="#12a7a7" stroke-width="7" />
              <path d="M150 727L165 720L175 730L162 742Z" stroke-width="3" /><path d="M103 778L110 770L120 775V788L108 792Z" fill="#1cc" stroke-width="5" />
              <path d="M35 840L50 815L70 820V840L45 850Z" /><circle cx="147" cy="840" r="12" /><circle cx="90" cy="888" r="11" />
              <path d="M190 810L205 815L222 808M190 825L215 828" fill="none" stroke="#2bb" stroke-width="5" />
            </g>
          </svg>
        </div>
        <div class="vtabs">
          <button v-for="(t, i) in viewTabs" :key="t[0]" class="vtab" :class="{ on: i === viewActive }" :style="{ width: t[1] + 'px' }" @click="viewActive = i">
            <svg :width="t[1]" height="20"><path :d="hangDown(t[1])" /></svg>{{ t[0] }}
          </button>
          <button class="vtab add" aria-label="新增"><svg width="30" height="20"><path :d="hangDown(30)" /><path d="M13.500 6.500H16.500V9.500H19.500V12.500H16.500V15.500H13.500V12.500H10.500V9.500H13.500Z" class="plus" /></svg></button>
        </div>
      </section>

      <aside class="panel">
        <div class="grip"></div>
        <div class="ptabs">
          <button v-for="(t, i) in panelTabs" :key="t.label" class="ptab" :class="{ on: i === 0 }" :style="{ width: t.width + 'px', zIndex: 9 - i }">
            <svg class="bg" :width="t.width" height="22"><path :d="leanRight(t.width)" /></svg>
            <svg width="18" height="18" viewBox="0 0 18 18" v-html="t.icon" />{{ t.label }}
          </button>
          <button class="cog" aria-label="选项"><svg width="16" height="16" viewBox="6 6 16 16" v-html="icons.gear" /></button>
        </div>
        <div class="ptools">
          <button v-for="(p, i) in panelTools" :key="i" :aria-label="'图层工具 ' + (i + 1)"><svg width="20" height="20" viewBox="0 0 20 20" v-html="p" /></button>
        </div>
        <div class="layers">
          <table>
            <colgroup><col class="cname" /><col class="c" /><col class="c" /><col class="c" /><col class="c" /><col class="cm" /></colgroup>
            <thead><tr><th>名称</th><th></th><th></th><th></th><th></th><th class="mat">材质</th></tr></thead>
            <tbody>
              <tr v-for="l in layers" :key="l.name" :class="{ sel: l.selected, cur: l.current }">
                <td :class="['name', { child: l.depth, parent: l.parent }]">
                  <svg v-if="l.parent" class="minus" width="9" height="9"><rect x=".5" y=".5" width="8" height="8" fill="#fff" stroke="#8aa" /><path d="M2 4.500H7" stroke="#000" /></svg>{{ l.name }}
                </td>
                <td><svg v-if="l.current" width="12" height="12"><path d="M1 6L3 5L5 8L10 2L11 3L5 11H4Z" /></svg></td>
                <td><svg v-if="l.bulb" width="12" height="14"><path d="M6 1.500Q10 1.500 10 5Q10 7 8 9V11H4V9Q2 7 2 5Q2 1.500 6 1.500Z" :fill="bulbFill[l.bulb]" stroke="#fff" stroke-width="2" /><path d="M6 1.500Q10 1.500 10 5Q10 7 8 9V11H4V9Q2 7 2 5Q2 1.500 6 1.500Z" :fill="bulbFill[l.bulb]" :stroke="l.bulb === 'off' ? '#1b5a9c' : '#77761f'" /><path d="M4.500 12H7.500" stroke="#222" stroke-width="2" /></svg></td>
                <td>
                  <svg v-if="l.lock" width="13" height="14">
                    <g v-if="l.lock === 'open'"><path d="M1.500 6.500H8.500V12.500H1.500ZM7.500 6V3.500Q7.500 1.500 9.500 1.500T11.500 3.500V5" fill="none" stroke="#fff" stroke-width="3" /><path d="M1.500 6.500H8.500V12.500H1.500Z" fill="#fff" stroke="#000" /><path d="M7.500 6V3.500Q7.500 1.500 9.500 1.500T11.500 3.500V5" fill="none" stroke="#000" /></g>
                    <g v-else><path d="M4 6V4Q4 1.500 6.500 1.500T9 4V6" fill="none" stroke="#222" stroke-width="1.500" /><rect x="2.500" y="6.500" width="8" height="6" :fill="l.lock === 'shut' ? '#4a97e2' : '#fff'" stroke="#000" /><path v-if="l.lock === 'half'" d="M6.500 7H10V12H6.500Z" fill="#4a97e2" /></g>
                  </svg>
                </td>
                <td><span class="sw" :style="{ background: l.color }"></span></td>
                <td><span class="ball"></span></td>
              </tr>
            </tbody>
          </table>
        </div>
        <div class="hscroll"><i class="left"></i><span class="thumb"><svg width="10" height="8"><path d="M1.500 1V7M4.500 1V7M7.500 1V7" stroke="#555" /></svg></span><i class="right"></i></div>
      </aside>
    </main>

    <footer class="status">
      <span class="s1">工作平面</span><span class="s2 latin">x -4166.95</span><span class="s2 latin">y 2039.83</span><span class="s2 latin">z 0.00</span><span class="s2">毫米</span>
      <span class="s3"><b></b>钢板</span><span class="s4">锁定格点</span><span class="s5">正交</span><span class="s4 hi">平面模式</span><span class="s4 hi">物件锁点</span><span class="s4 hi">智慧轨迹</span><span class="s6 hi">操作轴</span>
      <span class="s7">记录建构历史</span><span class="s6">过滤器</span><span class="s8">可用的物理内存<em class="latin">: 3...</em></span>
      <div class="mark"><span class="zh">学犀牛中文网</span><span>.xuexiniu.com</span></div>
    </footer>

    <div class="task">
      <svg class="orb" width="38" height="14"><circle cx="19" cy="17" r="17" fill="#7f9fb8" stroke="#43596c" /><ellipse cx="19" cy="5" rx="11" ry="4" fill="#c7dbe8" /><path d="M11 9Q15 6 19 9L18 14H10Z" fill="#e5552a" /><path d="M20 9Q24 11 28 8L27 14H19Z" fill="#8ab83a" /></svg>
      <span class="green"></span><span class="tb"></span><span class="tb"></span><span class="tb v"></span><span class="tb y"></span><span class="tb b"></span><span class="tb w"></span>
      <span class="tray"></span><span class="desk"></span>
    </div>
  </div>
</template>

<style>
body { margin: 0; overflow: hidden; }
</style>

<style scoped>
* { box-sizing: border-box; }
.app { display: flex; flex-direction: column; height: 100vh; background: #dfe2ea; color: #000; font: 12px/16px "Noto Sans CJK SC", sans-serif; overflow: hidden; white-space: nowrap; }
.defs { position: absolute; width: 0; height: 0; }
button { border: 0; padding: 0; margin: 0; background: none; color: inherit; font: inherit; white-space: pre; }
svg { display: block; flex: none; }
.latin { font-family: "Liberation Mono", monospace; font-size: 10px; white-space: pre; }

.title { flex: none; height: 22px; display: flex; align-items: center; padding: 0 3px 0 1px; border-bottom: 1px solid #444; box-sizing: border-box;
  background: linear-gradient(90deg, #b5b5b5 0, #c9c9c9 20%, #bdbdbd 34%, #777 42%, #6a6a6a 55%, #8c8c8c 62%, #858585 64%, #505050 67%, #565656 71%, #7a7a7a 74%, #4f4f4f 80%, #585858 84%, #8a7f76 89%, #8b8580 92%, #999 100%); }
.title h1 { flex: 1; margin: 0 0 0 4px; font: 12px/18px "Noto Sans", "Noto Sans CJK SC", sans-serif; }
.winbtns { display: flex; align-self: flex-start; height: 18px; border: 1px solid #3c3c3c; border-top: 0; border-radius: 0 0 5px 5px; overflow: hidden; }
.winbtns button { width: 27px; display: flex; align-items: center; justify-content: center; background: linear-gradient(#c6c6c6, #a3a3a3 50%, #858585 50%, #aaa); border-right: 1px solid #555; }
.winbtns .close { width: 47px; border: 0; background: linear-gradient(#e4a79a, #cf6a55 50%, #b32f17 50%, #d4694a); }

.menu { flex: none; display: flex; height: 20px; padding-left: 7px; border-bottom: 1px solid #a9b0c4; background: linear-gradient(#fff, #eff1f9 35%, #d8def0 45%, #e1e6f6); }
.menu button { text-align: left; font: 12px/18px "Noto Sans", "Noto Sans CJK SC", sans-serif; }

.top { flex: none; display: flex; height: 58px; padding-top: 4px; }
.arq { width: 397px; height: 52px; position: relative; border-right: 1px solid #b6bccb; border-bottom: 1px solid #b6bccb; background: linear-gradient(#dfe2ea 17px, #f1f3f6 17px, #e0e3ea); }
.arq::before, .tools::before { content: ""; position: absolute; left: 3px; top: 1px; bottom: 2px; width: 3px; border: solid #b4bac9; border-width: 0 1px; }
.tabs { display: flex; height: 17px; padding-left: 7px; position: relative; border-bottom: 1px solid #a6afbf; }
.tab { position: relative; isolation: isolate; flex: none; height: 17px; line-height: 17px; text-align: left; }
.tab + .tab { margin-left: -6px; }
.tab.on { z-index: 1; }
.tab svg { position: absolute; left: 0; top: 0; z-index: -1; }
.tab path, .vtab path { fill: #d4d9e8; stroke: #9fa9bb; }
.tab.on path { fill: #f7f8fa; }
.tab.on svg { height: 18px; }
.cog { position: absolute; right: 1px; top: -1px; z-index: 2; }
.bar { display: flex; padding-left: 7px; padding-top: 1px; }
.tool { width: 28px; height: 28px; flex: none; }

.cmd { flex: 1; margin-left: 7px; height: 43px; margin-top: -1px; padding-left: 3px; border-left: 1px solid #b4bac9; }
.history { display: flex; height: 28px; background: #fff; border-bottom: 1px solid #9aa4b8; }
.history p { flex: 1; margin: 0; line-height: 17px; }
.vscroll, .spin { width: 17px; display: flex; flex-direction: column; justify-content: space-around; align-items: center; background: #f0f0f0; }
.prompt { display: flex; height: 16px; background: #fff; line-height: 14px; }
.prompt label { font-weight: bold; }
.colon { padding-left: 3px; }
.caret { width: 1px; height: 12px; margin: 1px 0 0 5px; background: #000; }
.prompt input { flex: 1; min-width: 0; border: 0; padding: 0 2px; outline: 0; background: none; }
.spin i { border-bottom-color: #4765ac; border-top-color: #4765ac; }
i { display: block; width: 0; height: 0; border: 0 solid transparent; }
i.up { border-width: 0 3px 4px; border-bottom-color: #444; }
i.down { border-width: 4px 3px 0; border-top-color: #444; }
i.left { border-width: 3px 4px 3px 0; border-right-color: #222; }
i.right { border-width: 3px 0 3px 4px; border-left-color: #222; }

.tools { flex: none; position: relative; height: 52px; padding-top: 2px; background: linear-gradient(#dfe2ea 18px, #f3f4f7 18px, #dfe2ea); }
.group { display: flex; padding-right: 6px; }
.group + .group { position: relative; }
.group + .group::before { content: ""; position: absolute; left: -4px; top: 1px; height: 26px; width: 1px; background: #b9bfcc; }
.group:first-child { padding-right: 12px; }
.group:nth-child(2)::before { left: -8px; width: 5px; background: none; border: solid #b9bfcc; border-width: 0 1px; }

main { flex: 1; min-height: 0; display: flex; }
.side { width: 68px; flex: none; padding-top: 8px; }
.grip { height: 3px; margin: 0 6px 0 3px; border: solid #b4bac9; border-width: 1px 0; }
.grid { display: grid; grid-template-columns: 28px 28px; padding: 1px; }
.work { flex: 1; min-width: 0; display: flex; flex-direction: column; padding-top: 5px; }
.viewport { flex: 1; min-height: 0; position: relative; border: 1px solid #9aa4b8; background: #fff; }
.scene { width: 100%; height: 100%; }
.vlabel { position: absolute; left: 0; top: 0; height: 18px; padding: 0 3px 0 8px; display: flex; align-items: center; background: #8fa9c6; font: 12px/18px "Noto Sans", sans-serif; }
.vlabel i { border-width: 4px 3px 0; border-top-color: #000; }
.vlabel span { border-right: 1px solid #000; padding-right: 8px; margin-right: 2px; line-height: 14px; }
.vtabs { display: flex; height: 21px; }
.vtab { position: relative; isolation: isolate; height: 20px; padding-left: 3px; text-align: center; font: 12px/19px "Noto Sans", sans-serif; }
.vtab svg { position: absolute; left: 0; top: 0; z-index: -1; }
.vtab.on path { fill: #fff; }
.add { width: 30px; }
.add path { fill: #dfe2ea; }
.add .plus { stroke: #555; }

.panel { width: 192px; flex: none; margin-left: 8px; padding-top: 8px; display: flex; flex-direction: column; margin-bottom: 4px; }
.panel .grip { margin: 0 2px 0 0; }
.ptabs { display: flex; height: 22px; margin-top: 2px; position: relative; }
.ptab { position: relative; isolation: isolate; display: flex; align-items: center; padding-left: 3px; gap: 1px; flex: none; }
.ptab + .ptab { margin-left: -2px; }
.ptab .bg { position: absolute; left: 0; top: 0; z-index: -1; }
.ptab .bg path { fill: #d4d9e8; stroke: #9fa9bb; }
.ptab.on .bg path { fill: #f7f8fa; }
.ptabs .cog { right: 1px; top: 4px; }
.ptools { display: flex; height: 21px; justify-content: space-between; background: #f4f5f8; border-left: 1px solid #9aa4b8; border-bottom: 1px solid #a5acba; }
.ptools button { width: 21px; }
.layers { flex: 1; min-height: 0; background: #cce8cf; border-left: 1px solid #9aa4b8; border-right: 1px solid #9aa4b8; }
table { width: 100%; table-layout: fixed; border-collapse: collapse; }
.cname { width: 86px; } .c { width: 17px; }
th { height: 24px; padding: 0 0 0 5px; font-weight: normal; text-align: left; background: linear-gradient(#fff 45%, #f3f4f6 50%); border-right: 1px solid #dfe1e6; }
th.mat { text-align: right; padding-right: 4px; border: 0; }
td { height: 17px; padding: 0; line-height: 16px; border-bottom: 1px dotted #f2fbf3; }
td svg, .sw, .ball { margin: 0 auto; }
td.name { padding-left: 20px; font-family: "Liberation Sans", "Noto Sans CJK SC", sans-serif; overflow: visible; }
td.child { padding-left: 34px; }
td.parent { font-size: 11px; position: relative; }
.minus { position: absolute; left: 5px; top: 4px; }
.cur .name { font-weight: bold; }
.sel { background: #3297ff; color: #fff; }
.sw { display: block; width: 12px; height: 12px; border: 1px solid #000; }
.sel .sw { border-color: #fff; }
.ball { display: block; width: 12px; height: 12px; border-radius: 50%; background: #fff; margin-left: 3px; }
.hscroll { height: 17px; display: flex; align-items: center; padding: 0 6px; background: #ececec; border: 1px solid #9aa4b8; border-top: 1px solid #f5f5f5; }
.thumb { width: 70px; height: 14px; margin: 0 auto 0 8px; border: 1px solid #8d8f94; border-radius: 2px; background: linear-gradient(#f5f5f5 45%, #d4d5d8 50%, #cfd0d4); display: flex; align-items: center; justify-content: center; }

.status { flex: none; display: flex; height: 20px; position: relative; border-top: 1px solid #9aa4b8; line-height: 20px; }
.status > span { flex: none; text-align: center; border-right: 1px solid #9aa4b8; overflow: hidden; }
.s1 { width: 71px; } .s2 { width: 88px; } .s3 { width: 173px; } .s4 { width: 72px; } .s5 { width: 42px; } .s6 { width: 57px; } .s7 { width: 102px; } .s8 { width: 131px; }
.status .s3 { display: flex; align-items: center; gap: 1px; padding-left: 3px; }
.s3 b { width: 14px; height: 14px; border: 1px solid #000; background: #5f5fb0; }
.status .hi { background: #e0f0fb; font-weight: bold; }
.status em { font-style: normal; }
.mark { position: absolute; left: 500px; bottom: 3px; height: 28px; display: flex; align-items: center; font: 20px/28px "Noto Sans", sans-serif; color: rgba(236, 238, 243, .5); text-shadow: 1px 1px 1px rgba(120, 125, 135, .35); pointer-events: none; }
.mark .zh { font: bold 24px/28px "Noto Sans CJK SC", sans-serif; }

.task { flex: none; height: 8px; display: flex; gap: 4px; position: relative; padding-left: 72px; background: linear-gradient(#777 1px, #3a3a3a 2px, #1c1c1c); }
.orb { position: absolute; left: 8px; bottom: 0; }
.green { width: 9px; height: 3px; align-self: flex-end; margin-right: 18px; background: radial-gradient(#3b0, #1c1c1c); }
.tb { width: 42px; border: 1px solid #999; border-bottom: 0; border-radius: 2px 2px 0 0; background: linear-gradient(#999, #444); }
.tb.v { background: radial-gradient(circle at 50% 100%, #a4c 3px, #777 5px); }
.tb.y { width: 35px; background: linear-gradient(#f4ec9a, #d8c840); }
.tb.b { margin-left: 8px; background: radial-gradient(ellipse at 50% 100%, #47f 8px, #777 9px); }
.tb.w { width: 37px; background: #c9c9c9; }
.tray { width: 15px; height: 4px; align-self: flex-end; margin-left: auto; background: #e8521c; border-top: 1px solid #fff; }
.desk { width: 13px; margin-left: 136px; margin-right: 1px; border: 1px solid #888; background: #555; }
</style>
